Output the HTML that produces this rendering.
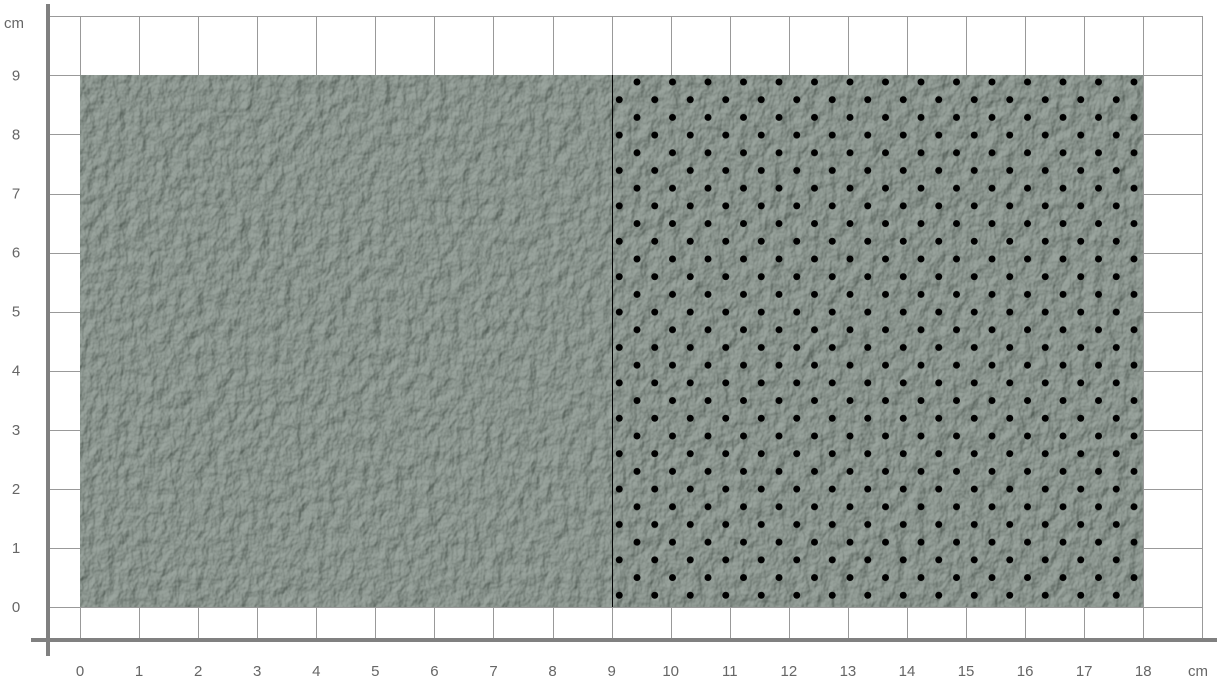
<!DOCTYPE html>
<html><head><style>
html,body{margin:0;padding:0;background:#fff;}
svg{display:block}
text{font-family:"Liberation Sans","DejaVu Sans",sans-serif;font-size:15px;fill:#666}
</style></head><body>
<svg width="1225" height="684" viewBox="0 0 1225 684" xmlns="http://www.w3.org/2000/svg">
<defs>
<filter id="lt" x="0" y="0" width="100%" height="100%" color-interpolation-filters="sRGB">
<feTurbulence type="fractalNoise" baseFrequency="0.09 0.07" numOctaves="3" seed="4" result="n"/>
<feDiffuseLighting in="n" surfaceScale="2.5" lighting-color="#fff" result="l"><feDistantLight azimuth="225" elevation="55"/></feDiffuseLighting>
<feColorMatrix in="l" type="matrix" values="0.4 0 0 0 0.21  0.4 0 0 0 0.25  0.4 0 0 0 0.225  0 0 0 0 1"/>
</filter>
<pattern id="dots" patternUnits="userSpaceOnUse" x="601.5" y="73" width="35.5" height="35.4">
<circle cx="0" cy="9" r="3.5" fill="#000"/><circle cx="35.5" cy="9" r="3.5" fill="#000"/>
<circle cx="17.75" cy="26.7" r="3.5" fill="#000"/>
</pattern>
</defs>
<g stroke="#999" stroke-width="1" id="grid"></g>
<rect x="80" y="75" width="1063" height="532" fill="#8a938d"/>
<rect x="80" y="75" width="1063" height="532" filter="url(#lt)"/>
<rect x="613" y="75" width="530" height="532" fill="url(#dots)"/>
<line x1="612.5" y1="75" x2="612.5" y2="607" stroke="#000" stroke-width="1"/>
<g id="lbl"></g>
<rect x="46" y="4" width="4" height="652" fill="#808080"/>
<rect x="31" y="638" width="1186" height="4" fill="#808080"/>
<text x="4" y="28">cm</text>
<text x="1188" y="676">cm</text>
</svg>
<script>
var g=document.getElementById('grid'),l=document.getElementById('lbl'),ns="http://www.w3.org/2000/svg";
function ln(a,b,c,d,t){var e=document.createElementNS(ns,'line');e.setAttribute('x1',a);e.setAttribute('y1',b);e.setAttribute('x2',c);e.setAttribute('y2',d);t.appendChild(e);}
var s=59.07;
for(var i=0;i<=19;i++){var x=Math.round(80+i*s)+0.5;ln(x,16,x,640,g);}
ln(48,16.5,1202,16.5,g);
for(var j=0;j<=10;j++){var y=Math.round(607-j*s)+0.5;ln(48,y,1202,y,g);}
for(var i=0;i<=18;i++){var t=document.createElementNS(ns,'text');t.setAttribute('x',80+i*s);t.setAttribute('y',676);t.setAttribute('text-anchor','middle');t.textContent=i;l.appendChild(t);}
for(var j=0;j<=9;j++){var t=document.createElementNS(ns,'text');t.setAttribute('x',16);t.setAttribute('y',612-j*s);t.setAttribute('text-anchor','middle');t.textContent=j;l.appendChild(t);}
</script>
</body></html>
